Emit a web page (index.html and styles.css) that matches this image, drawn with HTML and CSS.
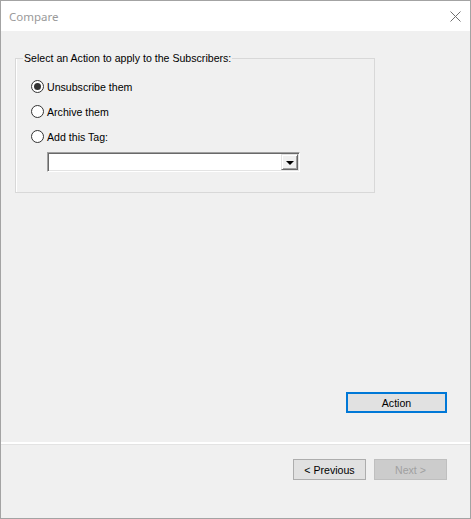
FILE: index.html
```html
<!DOCTYPE html>
<html>
<head>
<meta charset="utf-8">
<title>Compare</title>
<link rel="stylesheet" href="styles.css">
</head>
<body>
<div class="window">
  <div class="titlebar">
    <span class="title">Compare</span>
    <svg class="close" width="11" height="11" viewBox="0 0 11 11"><path d="M0.5 0.5 L10.5 10.5 M10.5 0.5 L0.5 10.5" stroke="#707070" stroke-width="1" fill="none"/></svg>
  </div>
  <div class="main">
    <fieldset class="group">
      <legend>Select an Action to apply to the Subscribers:</legend>
      <div class="row"><span class="radio checked"></span><span class="label">Unsubscribe them</span></div>
      <div class="row"><span class="radio"></span><span class="label">Archive them</span></div>
      <div class="row"><span class="radio"></span><span class="label">Add this Tag:</span></div>
      <div class="combo">
        <div class="combo-btn"><span class="arrow"></span></div>
      </div>
    </fieldset>
    <div class="btn action">Action</div>
  </div>
  <div class="sep"></div>
  <div class="footer">
    <div class="btn nav">&lt; Previous</div>
    <div class="btn nav disabled">Next &gt;</div>
  </div>
</div>
</body>
</html>
```
FILE: styles.css
```css
* { box-sizing: border-box; }
html, body { margin: 0; padding: 0; background: #f0f0f0; }
body { font-family: "Liberation Sans", Arial, sans-serif; font-size: 10.6px; color: #000; }
.window {
  width: 471px; height: 519px;
  border: 1px solid #a3a3a3;
  display: flex; flex-direction: column;
  background: #f0f0f0;
}
.titlebar {
  height: 30px; background: #fff;
  display: flex; align-items: center;
  padding-left: 8px; padding-right: 9px;
}
.title { font-family: "Noto Sans", sans-serif; font-size: 11.5px; color: #9a9a9a; margin-top: 1px; }
.close { margin-left: auto; margin-top: 1px; }
.main {
  height: 411px;
  display: flex; flex-direction: column;
}
.group {
  margin: 21px 0 0 14px; padding: 9px 0 0 0;
  width: 360px; height: 141px;
  border: 1px solid #d8d8d8;
  box-shadow: inset 1px 0 #fff;
  min-width: 0;
}
.group legend {
  margin-left: 7px; padding: 0 1px;
  line-height: 13px; font-size: 10.6px;
}
.row { height: 25px; display: flex; align-items: center; margin-left: 15px; }
.radio {
  width: 13px; height: 13px; border-radius: 50%;
  border: 1px solid #333; background: #fff;
  display: flex; align-items: center; justify-content: center;
  flex: none;
}
.radio.checked::after {
  content: ""; width: 7px; height: 7px; border-radius: 50%; background: #333;
}
.label { margin-left: 3px; }
.combo {
  margin: 3px 0 0 31px;
  width: 253px; height: 20px;
  background: #fff;
  border-top: 1px solid #a0a0a0; border-left: 1px solid #a0a0a0;
  border-right: 1px solid #fff; border-bottom: 1px solid #fff;
  box-shadow: inset 1px 1px #696969, inset -1px -1px #e3e3e3;
  display: flex; justify-content: flex-end; padding: 1px 1px 1px 0;
}
.combo-btn {
  width: 17px; height: 16px;
  background: #f0f0f0;
  border-top: 1px solid #e3e3e3; border-left: 1px solid #e3e3e3;
  border-right: 1px solid #696969; border-bottom: 1px solid #696969;
  box-shadow: inset 1px 1px #fff, inset -1px -1px #a0a0a0;
  display: flex; align-items: center; justify-content: center;
}
.arrow {
  width: 0; height: 0;
  border-left: 4px solid transparent; border-right: 4px solid transparent;
  border-top: 4px solid #000; margin-top: 1px;
}
.btn {
  height: 21px;
  display: flex; align-items: center; justify-content: center;
  background: #e1e1e1; border: 1px solid #adadad;
  font-size: 10.6px;
}
.action {
  width: 101px; align-self: flex-end;
  margin: auto 23px 29px 0;
  border: 2px solid #0078d7;
}
.sep { height: 3px; border-top: 2px solid #fff; border-bottom: 1px solid #e3e3e3; }
.footer {
  flex: 1;
  display: flex; justify-content: flex-end; gap: 8px;
  padding: 14px 23px 0 0;
}
.nav { width: 73px; }
.disabled { background: #cccccc; border-color: #bfbfbf; color: #a0a0a0; }
```
